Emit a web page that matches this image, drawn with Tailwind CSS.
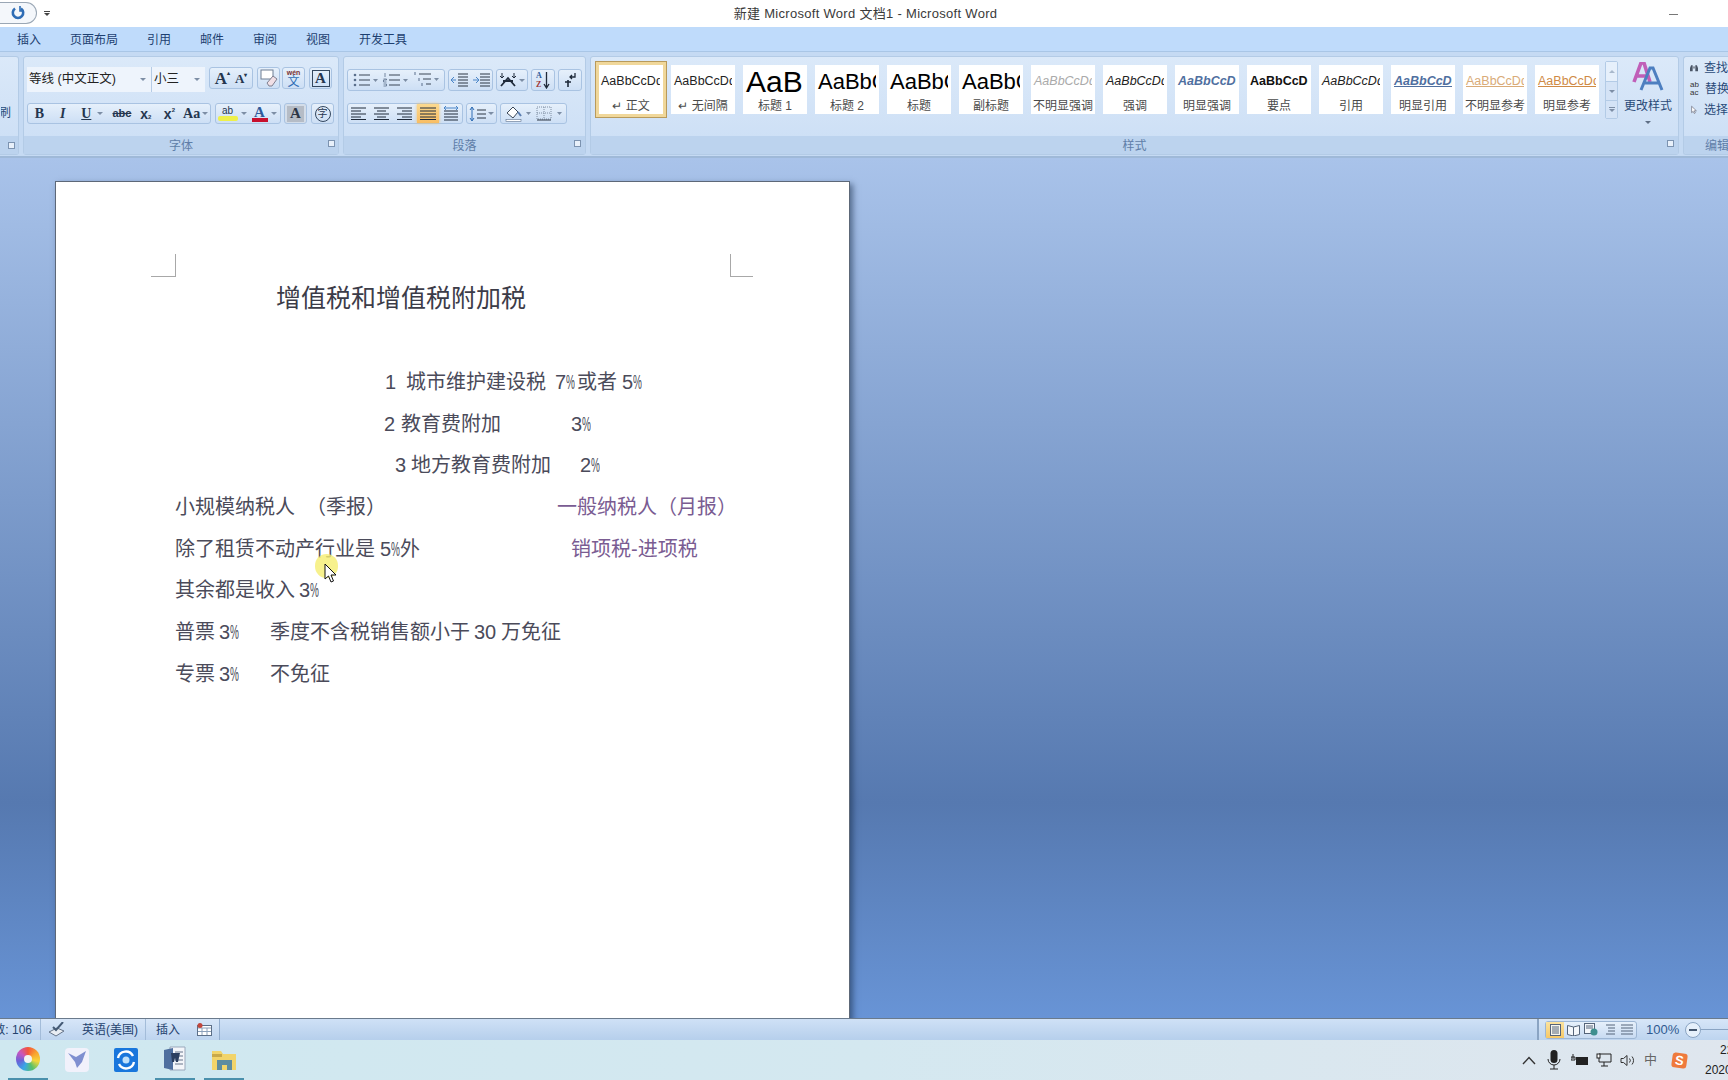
<!DOCTYPE html>
<html lang="zh-CN">
<head>
<meta charset="UTF-8">
<script src="https://cdn.jsdelivr.net/npm/@tailwindcss/browser@4"></script>
<title>新建 Microsoft Word 文档1 - Microsoft Word</title>
</head>
<body class="w-[1728px] h-[1080px] overflow-hidden flex flex-col bg-white font-['Liberation_Sans','Noto_Sans_CJK_SC',sans-serif] text-[#1f3f6e]">

<!-- title bar -->
<header class="h-[27px] shrink-0 bg-white relative flex items-center">
  <div class="w-[37px] h-[22px] -mt-[2px] rounded-r-full border border-[#9aa7b5] border-l-0 bg-[#f4f7fb] flex items-center justify-end pr-[10px]">
    <svg width="16" height="16" viewBox="0 0 16 16" fill="none"><path d="M5 3.500a5.200 5.200 0 1 0 6 0" stroke="#2f6db5" stroke-width="2.600"/><path d="M10 1v5h4" stroke="#2f6db5" stroke-width="1.600"/></svg>
  </div>
  <div class="ml-[7px] flex flex-col items-center gap-[1px]"><span class="w-[6px] h-[1px] bg-[#444]"></span><span class="w-0 h-0 border-x-[3px] border-x-transparent border-t-[3px] border-t-[#444]"></span></div>
  <div class="flex-1 text-center text-[13px] text-[#3a3a3a] ml-[12px] tracking-[0.3px]">新建 Microsoft Word 文档1 - Microsoft Word</div>
  <div class="w-[9px] h-[1px] bg-[#777] mr-[50px] mt-[1px]"></div>
</header>

<!-- tabs -->
<nav class="h-[25px] shrink-0 bg-[#bfdbfb] border-b border-[#a9c6e6] flex items-center pt-[2px] pl-[17px] gap-[29px] text-[12px] text-[#1d3f70]">
  <span>插入</span><span>页面布局</span><span>引用</span><span>邮件</span><span>审阅</span><span>视图</span><span>开发工具</span>
</nav>

<!-- ribbon -->
<section class="h-[106px] shrink-0 bg-[#c5daf3] pt-[4px] flex gap-[4px] border-b-2 border-[#9fb9d8]">

  <div class="w-[19px] h-[99px] shrink-0 rounded-r-[3px] border border-l-0 border-[#b3cbe6] flex flex-col bg-linear-to-b from-[#dbe9f9] to-[#cbdef5]">
    <div class="h-[80px] flex items-end justify-end pb-[14px] pr-[7px] text-[12px] text-[#2a4a78]"><span class="w-[10px] overflow-hidden whitespace-nowrap flex justify-end">刷</span></div>
    <div class="h-[18px] bg-[#bcd3ee] flex items-center justify-end pr-[3px]"><span class="w-[7px] h-[7px] border border-[#7c93b0] bg-[#e8f0fa]"></span></div>
  </div>

  <!-- font group -->
  <div class="w-[316px] h-[99px] shrink-0 rounded-[3px] border border-[#b3cbe6] flex flex-col bg-linear-to-b from-[#dbe9f9] to-[#cbdef5]">
    <div class="h-[80px] pl-[3px] pt-[10px] flex flex-col gap-[11px]">
      <div class="flex h-[25px] items-start">
        <div class="w-[125px] h-[25px] bg-[#eef4fc] border-r border-[#b5cbe5] flex items-center pl-[2px] text-[12.500px] text-[#222] justify-between pr-[5px]">等线 (中文正文)<span class="w-0 h-0 border-x-[3px] border-x-transparent border-t-[3px] border-t-[#7d8ea5]"></span></div>
        <div class="w-[53px] h-[25px] bg-[#eef4fc] flex items-center pl-[2px] text-[12.500px] text-[#222] justify-between pr-[5px]">小三<span class="w-0 h-0 border-x-[3px] border-x-transparent border-t-[3px] border-t-[#7d8ea5]"></span></div>
        <div class="ml-[4px] w-[44px] h-[22px] rounded-[3px] border border-[#a9c3e2] bg-linear-to-b from-[#e6f0fb] to-[#cddff5] flex items-center justify-center gap-[5px] font-['Liberation_Serif',serif] font-bold text-[#25364f]"><span class="text-[17px] leading-none">A<span class="text-[6px] align-top">▴</span></span><span class="text-[13px] leading-none">A<span class="text-[6px] align-top">▾</span></span></div>
        <div class="ml-[4px] w-[23px] h-[22px] rounded-[3px] border border-[#a9c3e2] bg-linear-to-b from-[#e6f0fb] to-[#cddff5] flex items-center justify-center">
          <svg width="18" height="18" viewBox="0 0 18 18"><rect x="1" y="1" width="12" height="9" fill="#fff" stroke="#6f7f94"/><path d="M7 14l6-7 4 3-5 7H9z" fill="#f0dfe6" stroke="#7f7f8f"/></svg>
        </div>
        <div class="ml-[2px] w-[23px] h-[22px] rounded-[3px] border border-[#a9c3e2] bg-linear-to-b from-[#e6f0fb] to-[#cddff5] flex flex-col items-center justify-center leading-none"><span class="text-[7px] font-bold text-[#7a3030]">wén</span><span class="text-[12px] text-[#2f6db5]">文</span></div>
        <div class="ml-[4px] w-[23px] h-[22px] rounded-[3px] border border-[#a9c3e2] bg-linear-to-b from-[#e6f0fb] to-[#cddff5] flex items-center justify-center"><span class="w-[18px] h-[17px] border border-[#33475f] flex items-center justify-center text-[15px] font-bold font-['Liberation_Serif',serif] text-[#25364f]">A</span></div>
      </div>
      <div class="flex h-[21px] items-start">
        <div class="w-[184px] h-[21px] rounded-[3px] border border-[#a9c3e2] bg-linear-to-b from-[#e6f0fb] to-[#cddff5] flex items-center text-[#25364f]">
          <span class="w-[23px] text-center text-[14px] font-bold font-['Liberation_Serif',serif]">B</span>
          <span class="w-[24px] text-center text-[14px] italic font-bold font-['Liberation_Serif',serif]">I</span>
          <span class="w-[36px] flex items-center justify-center gap-[6px] text-[14px] font-bold font-['Liberation_Serif',serif] underline">U<span class="w-0 h-0 border-x-[3px] border-x-transparent border-t-[3px] border-t-[#7d8ea5]"></span></span>
          <span class="w-[24px] text-center text-[11px] font-bold line-through">abc</span>
          <span class="w-[24px] text-center text-[14px] font-bold leading-none">x<span class="text-[6px]">2</span></span>
          <span class="w-[24px] text-center text-[14px] font-bold leading-none">x<span class="text-[6px] align-top">2</span></span>
          <span class="w-[29px] flex items-center justify-center gap-[2px] text-[14px] font-bold font-['Liberation_Serif',serif]">Aa<span class="w-0 h-0 border-x-[3px] border-x-transparent border-t-[3px] border-t-[#7d8ea5]"></span></span>
        </div>
        <div class="ml-[4px] w-[66px] h-[21px] rounded-[3px] border border-[#a9c3e2] bg-linear-to-b from-[#e6f0fb] to-[#cddff5] flex items-center">
          <span class="w-[33px] flex items-center justify-center gap-[3px]">
            <span class="flex flex-col items-center leading-none text-[10px] text-[#25364f]"><span class="w-[20px] text-center">ab</span><span class="w-[20px] h-[5px] bg-[#eef04a] rounded-[2px]"></span></span>
            <span class="w-0 h-0 border-x-[3px] border-x-transparent border-t-[3px] border-t-[#7d8ea5]"></span>
          </span>
          <span class="w-[33px] flex items-center justify-center gap-[3px]">
            <span class="flex flex-col items-center leading-none text-[15px] font-bold font-['Liberation_Serif',serif] text-[#2f5a9a]"><span class="h-[13px]">A</span><span class="w-[16px] h-[4px] bg-[#c8102e]"></span></span>
            <span class="w-0 h-0 border-x-[3px] border-x-transparent border-t-[3px] border-t-[#7d8ea5]"></span>
          </span>
        </div>
        <div class="ml-[3px] w-[23px] h-[21px] rounded-[3px] border border-[#a9c3e2] bg-[#d3dde9] flex items-center justify-center"><span class="w-[17px] h-[16px] bg-[#b5bcc6] flex items-center justify-center text-[15px] font-bold font-['Liberation_Serif',serif] text-[#2c3645]">A</span></div>
        <div class="ml-[4px] w-[23px] h-[21px] rounded-[3px] border border-[#a9c3e2] bg-linear-to-b from-[#e6f0fb] to-[#cddff5] flex items-center justify-center"><span class="w-[16px] h-[16px] rounded-full border border-[#33475f] flex items-center justify-center text-[10px] text-[#25364f]">字</span></div>
      </div>
    </div>
    <div class="h-[18px] bg-[#bcd3ee] flex items-center pt-[2px] relative"><span class="flex-1 text-center text-[12px] text-[#5f7ea8]">字体</span><span class="absolute right-[3px] top-[4px] w-[7px] h-[7px] border border-[#7c93b0] bg-[#e8f0fa]"></span></div>
  </div>

  <!-- paragraph group -->
  <div class="w-[243px] h-[99px] shrink-0 rounded-[3px] border border-[#b3cbe6] flex flex-col bg-linear-to-b from-[#dbe9f9] to-[#cbdef5]">
    <div class="h-[80px] pl-[3px] pt-[12px] flex flex-col gap-[12px]">
      <div class="flex h-[22px] gap-[3px]">
        <div class="w-[98px] rounded-[3px] border border-[#a9c3e2] bg-linear-to-b from-[#e6f0fb] to-[#cddff5] flex items-center justify-around px-[2px]">
          <svg width="26" height="14" viewBox="0 0 26 14"><path d="M7 2h11M7 7h11M7 12h11" stroke="#3a4656"/><circle cx="3" cy="2" r="1.300" fill="#5a6f8c"/><circle cx="3" cy="7" r="1.300" fill="#5a6f8c"/><circle cx="3" cy="12" r="1.300" fill="#5a6f8c"/><path d="M21 6h5l-2.500 3z" fill="#7d8ea5"/></svg>
          <svg width="26" height="14" viewBox="0 0 26 14"><path d="M7 2h11M7 7h11M7 12h11" stroke="#3a4656"/><path d="M3 0v4M1.500 6h3v1h-3v2h3M1.500 11h3v2h-3" stroke="#5a6f8c" fill="none" stroke-width=".8"/><path d="M21 6h5l-2.500 3z" fill="#7d8ea5"/></svg>
          <svg width="28" height="16" viewBox="0 0 28 16"><path d="M7 2h12M11 7h8M14 12h5" stroke="#3a4656"/><path d="M3 0v3M7 6v3M10 11v3" stroke="#5a6f8c"/><path d="M22 6h5l-2.500 3z" fill="#7d8ea5"/></svg>
        </div>
        <div class="w-[45px] rounded-[3px] border border-[#a9c3e2] bg-linear-to-b from-[#e6f0fb] to-[#cddff5] flex items-center justify-around">
          <svg width="17" height="14" viewBox="0 0 17 14"><path d="M7 1h10M7 4h10M7 7h10M7 10h10M7 13h10" stroke="#2c3645"/><path d="M5 7H0M3 4 0 7l3 3" stroke="#4a85c8" fill="none"/></svg>
          <svg width="17" height="14" viewBox="0 0 17 14"><path d="M7 1h10M7 4h10M7 7h10M7 10h10M7 13h10" stroke="#2c3645"/><path d="M0 7h5M3 4l3 3-3 3" stroke="#4a85c8" fill="none"/></svg>
        </div>
        <div class="w-[32px] rounded-[3px] border border-[#a9c3e2] bg-linear-to-b from-[#e6f0fb] to-[#cddff5] flex items-center justify-center gap-[2px]">
          <svg width="18" height="14" viewBox="0 0 18 14" fill="none"><path d="M2 13 9 5l7 8M4 8h10" stroke="#1f2a3a" stroke-width="1.800"/><path d="M3 0v5M1 3l2 2 2-2M15 0v5M13 3l2 2 2-2" stroke="#1f2a3a"/></svg>
          <span class="w-0 h-0 border-x-[3px] border-x-transparent border-t-[3px] border-t-[#7d8ea5]"></span>
        </div>
        <div class="w-[24px] rounded-[3px] border border-[#a9c3e2] bg-linear-to-b from-[#e6f0fb] to-[#cddff5] flex items-center justify-center gap-[1px]">
          <span class="flex flex-col text-[8px] leading-[9px] font-bold font-['Liberation_Serif',serif]"><span class="text-[#2f5a9a]">A</span><span class="text-[#a03838]">Z</span></span>
          <svg width="7" height="17" viewBox="0 0 7 17" fill="none"><path d="M3.500 0v15M1 12l2.500 4L6 12" stroke="#1f2a3a" stroke-width="1.300"/></svg>
        </div>
        <div class="w-[24px] rounded-[3px] border border-[#a9c3e2] bg-linear-to-b from-[#e6f0fb] to-[#cddff5] flex items-center justify-center">
          <svg width="14" height="16" viewBox="0 0 14 16" fill="none"><path d="M12 1v4H7M9 3 7 5l2 2" stroke="#1f2a3a" stroke-width="1.300"/><path d="M5 8v7M2 10h6" stroke="#1f2a3a" stroke-width="1.600"/></svg>
        </div>
      </div>
      <div class="flex h-[21px] gap-[3px]">
        <div class="w-[116px] rounded-[3px] border border-[#a9c3e2] bg-linear-to-b from-[#e6f0fb] to-[#cddff5] flex items-stretch">
          <span class="w-[23px] flex items-center justify-center"><svg width="16" height="13" viewBox="0 0 16 13"><path d="M0 1h15M0 4h10M0 7h15M0 10h10M0 12.500h15" stroke="#1f2a3a"/></svg></span>
          <span class="w-[23px] flex items-center justify-center"><svg width="16" height="13" viewBox="0 0 16 13"><path d="M0 1h15M3 4h9M0 7h15M3 10h9M0 12.500h15" stroke="#1f2a3a"/></svg></span>
          <span class="w-[24px] flex items-center justify-center"><svg width="16" height="13" viewBox="0 0 16 13"><path d="M0 1h15M5 4h10M0 7h15M5 10h10M0 12.500h15" stroke="#1f2a3a"/></svg></span>
          <span class="w-[23px] flex items-center justify-center bg-linear-to-b from-[#fbd98f] to-[#f8bd62] shadow-[0_0_3px_#f4c46e]"><svg width="16" height="13" viewBox="0 0 16 13"><path d="M0 1h16M0 4h16M0 7h16M0 10h16M0 12.500h16" stroke="#1f2a3a"/></svg></span>
          <span class="w-[23px] flex items-center justify-center"><svg width="16" height="15" viewBox="0 0 16 15" fill="none"><path d="M1 5h14M1 8h14M1 11h14M1 14h14" stroke="#1f2a3a"/><path d="M1 2h14M3 0 1 2l2 2M13 0l2 2-2 2" stroke="#4a85c8"/></svg></span>
        </div>
        <div class="w-[31px] rounded-[3px] border border-[#a9c3e2] bg-linear-to-b from-[#e6f0fb] to-[#cddff5] flex items-center justify-center gap-[2px]">
          <svg width="17" height="16" viewBox="0 0 17 16" fill="none"><path d="M8 4h9M8 8h9M8 12h9" stroke="#2c3645"/><path d="M3 1v14M1 4l2-3 2 3M1 12l2 3 2-3" stroke="#2f6db5"/></svg>
          <span class="w-0 h-0 border-x-[3px] border-x-transparent border-t-[3px] border-t-[#7d8ea5]"></span>
        </div>
        <div class="w-[67px] rounded-[3px] border border-[#a9c3e2] bg-linear-to-b from-[#e6f0fb] to-[#cddff5] flex items-center justify-around px-[2px]">
          <svg width="26" height="17" viewBox="0 0 26 17"><path d="M2 8 8 2l5 5-5 6z" fill="#fff" stroke="#3a4656"/><path d="M13 7l3 4" stroke="#5a7db0" stroke-width="2"/><rect x="1" y="14.500" width="15" height="2" fill="#fff" stroke="#5a6f8c" stroke-width=".6"/><path d="M21 7h5l-2.500 3z" fill="#7d8ea5"/></svg>
          <svg width="26" height="15" viewBox="0 0 26 15"><rect x="1" y="1" width="14" height="12" fill="none" stroke="#7f8ea2" stroke-dasharray="1 1"/><path d="M8 1v12M1 7h14" stroke="#7f8ea2" stroke-dasharray="1 1"/><path d="M1 14h14" stroke="#2c3645"/><path d="M21 6h5l-2.500 3z" fill="#7d8ea5"/></svg>
        </div>
      </div>
    </div>
    <div class="h-[18px] bg-[#bcd3ee] flex items-center pt-[2px] relative"><span class="flex-1 text-center text-[12px] text-[#5f7ea8]">段落</span><span class="absolute right-[4px] top-[4px] w-[7px] h-[7px] border border-[#7c93b0] bg-[#e8f0fa]"></span></div>
  </div>

  <!-- styles group -->
  <div class="w-[1089px] h-[99px] shrink-0 rounded-[3px] border border-[#b3cbe6] flex flex-col bg-linear-to-b from-[#dbe9f9] to-[#cbdef5]">
    <div class="h-[80px] flex pt-[8px]">
      <div class="flex gap-[8px] pl-[8px] h-[49px] text-[#4a4a4a]">
        <div class="w-[64px] h-[49px] shrink-0 bg-white flex flex-col items-start shadow-[0_0_0_3px_#f0d79a,0_0_0_4px_#b89a5c]"><div class="h-[32px] w-[61px] overflow-hidden whitespace-nowrap flex items-center pl-[2px] text-[12.500px] text-[#222]">AaBbCcDd</div><div class="h-[17px] w-full text-center text-[12px] leading-[19px]">↵ 正文</div></div>
        <div class="w-[64px] h-[49px] shrink-0 bg-white flex flex-col items-start"><div class="h-[32px] w-[61px] overflow-hidden whitespace-nowrap flex items-center pl-[3px] text-[12.500px] text-[#222]">AaBbCcDd</div><div class="h-[17px] w-full text-center text-[12px] leading-[19px]">↵ 无间隔</div></div>
        <div class="w-[64px] h-[49px] shrink-0 bg-white flex flex-col items-start"><div class="h-[32px] w-[61px] overflow-hidden whitespace-nowrap flex items-center pl-[3px] text-[30px] text-black">AaBbC</div><div class="h-[17px] w-full text-center text-[12px] leading-[19px]">标题 1</div></div>
        <div class="w-[64px] h-[49px] shrink-0 bg-white flex flex-col items-start"><div class="h-[32px] w-[61px] overflow-hidden whitespace-nowrap flex items-center pl-[3px] text-[22px] text-black">AaBbCc</div><div class="h-[17px] w-full text-center text-[12px] leading-[19px]">标题 2</div></div>
        <div class="w-[64px] h-[49px] shrink-0 bg-white flex flex-col items-start"><div class="h-[32px] w-[61px] overflow-hidden whitespace-nowrap flex items-center pl-[3px] text-[22px] text-black">AaBbCc</div><div class="h-[17px] w-full text-center text-[12px] leading-[19px]">标题</div></div>
        <div class="w-[64px] h-[49px] shrink-0 bg-white flex flex-col items-start"><div class="h-[32px] w-[61px] overflow-hidden whitespace-nowrap flex items-center pl-[3px] text-[22px] text-black">AaBbCc</div><div class="h-[17px] w-full text-center text-[12px] leading-[19px]">副标题</div></div>
        <div class="w-[64px] h-[49px] shrink-0 bg-white flex flex-col items-start"><div class="h-[32px] w-[61px] overflow-hidden whitespace-nowrap flex items-center pl-[3px] text-[12.500px] italic text-[#aaa]">AaBbCcDd</div><div class="h-[17px] w-full text-center text-[12px] leading-[19px] whitespace-nowrap">不明显强调</div></div>
        <div class="w-[64px] h-[49px] shrink-0 bg-white flex flex-col items-start"><div class="h-[32px] w-[61px] overflow-hidden whitespace-nowrap flex items-center pl-[3px] text-[12.500px] italic text-[#222]">AaBbCcDd</div><div class="h-[17px] w-full text-center text-[12px] leading-[19px]">强调</div></div>
        <div class="w-[64px] h-[49px] shrink-0 bg-white flex flex-col items-start"><div class="h-[32px] w-[61px] overflow-hidden whitespace-nowrap flex items-center pl-[3px] text-[12.500px] italic font-bold text-[#4f6f9f]">AaBbCcDd</div><div class="h-[17px] w-full text-center text-[12px] leading-[19px]">明显强调</div></div>
        <div class="w-[64px] h-[49px] shrink-0 bg-white flex flex-col items-start"><div class="h-[32px] w-[61px] overflow-hidden whitespace-nowrap flex items-center pl-[3px] text-[12.500px] font-bold text-[#111]">AaBbCcDd</div><div class="h-[17px] w-full text-center text-[12px] leading-[19px]">要点</div></div>
        <div class="w-[64px] h-[49px] shrink-0 bg-white flex flex-col items-start"><div class="h-[32px] w-[61px] overflow-hidden whitespace-nowrap flex items-center pl-[3px] text-[12.500px] italic text-[#222]">AaBbCcDd</div><div class="h-[17px] w-full text-center text-[12px] leading-[19px]">引用</div></div>
        <div class="w-[64px] h-[49px] shrink-0 bg-white flex flex-col items-start"><div class="h-[32px] w-[61px] overflow-hidden whitespace-nowrap flex items-center pl-[3px] text-[12.500px] italic font-bold underline text-[#4f6f9f]">AaBbCcDd</div><div class="h-[17px] w-full text-center text-[12px] leading-[19px]">明显引用</div></div>
        <div class="w-[64px] h-[49px] shrink-0 bg-white flex flex-col items-start"><div class="h-[32px] w-[61px] overflow-hidden whitespace-nowrap flex items-center pl-[3px] text-[12.500px] underline text-[#d9ab78]">AaBbCcDd</div><div class="h-[17px] w-full text-center text-[12px] leading-[19px] whitespace-nowrap">不明显参考</div></div>
        <div class="w-[64px] h-[49px] shrink-0 bg-white flex flex-col items-start"><div class="h-[32px] w-[61px] overflow-hidden whitespace-nowrap flex items-center pl-[3px] text-[12.500px] underline text-[#cf8a45]">AaBbCcDd</div><div class="h-[17px] w-full text-center text-[12px] leading-[19px]">明显参考</div></div>
      </div>
      <div class="ml-[6px] -mt-[4px] w-[13px] h-[58px] rounded-[2px] border border-[#b3cbe6] flex flex-col">
        <span class="h-[20px] bg-[#e6f0fb] border-b border-[#b3cbe6] flex items-center justify-center"><span class="w-0 h-0 border-x-[3px] border-x-transparent border-b-[3px] border-b-[#a9b9cc]"></span></span>
        <span class="h-[19px] bg-[#d4e3f6] border-b border-[#b3cbe6] flex items-center justify-center"><span class="w-0 h-0 border-x-[3px] border-x-transparent border-t-[3px] border-t-[#7d8ea5]"></span></span>
        <span class="h-[17px] bg-[#d4e3f6] flex flex-col items-center justify-center gap-[1px]"><span class="w-[6px] h-[1px] bg-[#7d8ea5]"></span><span class="w-0 h-0 border-x-[3px] border-x-transparent border-t-[3px] border-t-[#7d8ea5]"></span></span>
      </div>
      <div class="ml-[5px] -mt-[3px] w-[50px] flex flex-col items-center">
        <svg width="32" height="29" viewBox="0 0 32 29" fill="none"><path d="M2 20 9 1h3l6 19M5 14h11" stroke="#c05fb8" stroke-width="3.600"/><path d="M9 28 18 6h3l9 22M13 21h14" stroke="#4d7fc0" stroke-width="3"/></svg>
        <span class="mt-[7px] text-[12px] leading-[16px] whitespace-nowrap text-[#2a4a78]">更改样式</span>
        <span class="mt-[7px] w-0 h-0 border-x-[3px] border-x-transparent border-t-[3px] border-t-[#5f6f85]"></span>
      </div>
    </div>
    <div class="h-[18px] bg-[#bcd3ee] flex items-center pt-[2px] relative"><span class="flex-1 text-center text-[12px] text-[#5f7ea8]">样式</span><span class="absolute right-[4px] top-[4px] w-[7px] h-[7px] border border-[#7c93b0] bg-[#e8f0fa]"></span></div>
  </div>

  <!-- editing group, cut by the window edge -->
  <div class="flex-1 h-[99px] rounded-l-[3px] border border-r-0 border-[#b3cbe6] flex flex-col bg-linear-to-b from-[#dbe9f9] to-[#cbdef5] overflow-hidden">
    <div class="h-[80px] pl-[6px] pt-[2px] flex flex-col gap-[4px] text-[12px] text-[#2a4a78]">
      <div class="flex items-center gap-[6px] h-[17px] whitespace-nowrap"><svg width="15" height="14" viewBox="0 0 15 14"><path d="M2 2h3v11H0V7zM13 2h-3v11h5V7z" fill="#4a5566"/><rect x="5" y="4" width="5" height="4" fill="#88929f"/></svg><span>查找</span></div>
      <div class="flex items-center gap-[6px] h-[17px] whitespace-nowrap"><span class="w-[15px] text-[8px] leading-[8px] text-[#333]">ab<br>ac</span><span>替换</span></div>
      <div class="flex items-center gap-[6px] h-[17px] whitespace-nowrap"><svg width="15" height="16" viewBox="0 0 15 16"><path d="M3 1v12l3-2.500 2 4 2-1-2-4h4z" fill="#fff" stroke="#445"/></svg><span>选择</span></div>
    </div>
    <div class="h-[18px] bg-[#bcd3ee] flex items-center pt-[2px] pl-[21px] text-[12px] text-[#5f7ea8] whitespace-nowrap">编辑</div>
  </div>
</section>

<!-- document area -->
<main class="flex-1 min-h-0 bg-linear-to-b from-[#a9c3ea] via-[#5679b0] via-[75%] to-[#6894d6] pt-[23px] pl-[55px] overflow-hidden">
  <article class="w-[795px] h-[900px] bg-white border border-[#5d6878] shadow-[3px_3px_6px_rgba(20,40,70,0.55)] relative pt-[96px] text-[20px] text-[#4b4b5a] whitespace-nowrap">
    <span class="absolute left-[95px] top-[72px] w-[25px] h-[23px] border-r border-b border-[#a8a8a8]"></span>
    <span class="absolute left-[674px] top-[72px] w-[23px] h-[23px] border-l border-b border-[#a8a8a8]"></span>

    <h1 class="h-[42px] pl-[220px] flex items-center text-[25px] font-normal text-[#3c3c48]">增值税和增值税附加税</h1>

    <div class="mt-[41px] h-[41.700px] pl-[329px] flex items-center"><span class="w-[21px]">1</span><span class="w-[149px]">城市维护建设税</span><span class="w-[22px]">7<span class="inline-block w-[9px] origin-left scale-x-50">%</span></span><span class="w-[45px]">或者</span><span>5<span class="inline-block w-[9px] origin-left scale-x-50">%</span></span></div>
    <div class="h-[41.700px] pl-[328px] flex items-center"><span class="w-[17px]">2</span><span class="w-[170px]">教育费附加</span><span>3<span class="inline-block w-[9px] origin-left scale-x-50">%</span></span></div>
    <div class="h-[41.700px] pl-[339px] flex items-center"><span class="w-[16px]">3</span><span class="w-[169px]">地方教育费附加</span><span>2<span class="inline-block w-[9px] origin-left scale-x-50">%</span></span></div>
    <div class="h-[41.700px] pl-[119px] flex items-center"><span class="w-[131px]">小规模纳税人</span><span class="w-[251px]">（季报）</span><span class="text-[#7a5c92]">一般纳税人（月报）</span></div>
    <div class="h-[41.700px] pl-[119px] flex items-center"><span class="w-[205px]">除了租赁不动产行业是</span><span class="w-[20px]">5<span class="inline-block w-[9px] origin-left scale-x-50">%</span></span><span class="w-[171px]">外</span><span class="text-[#7a5c92]">销项税-进项税</span></div>
    <div class="h-[41.700px] pl-[119px] flex items-center"><span class="w-[124px]">其余都是收入</span><span>3<span class="inline-block w-[9px] origin-left scale-x-50">%</span></span></div>
    <div class="h-[41.700px] pl-[119px] flex items-center"><span class="w-[44px]">普票</span><span class="w-[51px]">3<span class="inline-block w-[9px] origin-left scale-x-50">%</span></span><span class="w-[204px]">季度不含税销售额小于</span><span class="w-[27px]">30</span><span>万免征</span></div>
    <div class="h-[41.700px] pl-[119px] flex items-center"><span class="w-[44px]">专票</span><span class="w-[51px]">3<span class="inline-block w-[9px] origin-left scale-x-50">%</span></span><span>不免征</span></div>

    <!-- mouse pointer with its highlight -->
    <span class="absolute left-[259px] top-[372px] w-[23px] h-[24px] rounded-full bg-[#f5ee70]/80"></span>
    <svg class="absolute left-[268px] top-[381px]" width="14" height="21" viewBox="0 0 14 21"><path d="M1 1v15l3.500-3 2.500 6 2.500-1-2.500-6H12z" fill="#fff" stroke="#111"/></svg>
  </article>
</main>

<!-- status bar -->
<div class="h-[22px] shrink-0 border-t border-[#6a7a8c] bg-linear-to-b from-[#d7e6f8] to-[#bdd4ef] flex items-center text-[12px] text-[#24426e]">
  <span class="w-[41px] h-full flex items-center justify-end pr-[8px] border-r border-[#a3bcd9] overflow-hidden whitespace-nowrap">字数: 106</span>
  <span class="w-[30px] flex justify-center"><svg width="17" height="15" viewBox="0 0 17 15" fill="none"><path d="M1 10l7 4 8-5-7-3z" fill="#e8edf3" stroke="#66758a"/><path d="M5 5l3 3 7-8" stroke="#445a75" stroke-width="2"/></svg></span>
  <span class="w-[75px] h-full flex items-center pl-[11px] border-r border-[#a3bcd9] whitespace-nowrap">英语(美国)</span>
  <span class="w-[44px] pl-[10px]">插入</span>
  <span class="w-[30px] h-full flex items-center pl-[7px] border-r border-[#93aecf]"><svg width="15" height="13" viewBox="0 0 15 13"><rect x=".5" y="2.500" width="14" height="10" fill="#fff" stroke="#5c6f88"/><path d="M1 5h13M5 5v7M10 5v7M1 8.500h13" stroke="#8ba0ba"/><circle cx="3" cy="2.500" r="2.500" fill="#c2463c"/></svg></span>
  <span class="w-[1319px] h-[21px] bg-linear-to-b from-[#cfe1f6] to-[#b6cfec] border-r-2 border-[#8aa4c3]"></span>
  <div class="ml-[6px] w-[92px] h-[18px] rounded-[3px] border border-[#9db6d4] bg-linear-to-b from-[#e6f0fb] to-[#c8dbf2] flex items-stretch">
    <span class="w-[18px] bg-linear-to-b from-[#fbe39f] to-[#f6c866] flex items-center justify-center"><svg width="11" height="12" viewBox="0 0 11 12"><rect x=".5" y=".5" width="10" height="11" fill="#f5f5ee" stroke="#55647a"/><path d="M2 3h7M2 5h7M2 7h7M2 9h7" stroke="#55647a"/></svg></span>
    <span class="w-[18px] flex items-center justify-center"><svg width="13" height="12" viewBox="0 0 13 12"><path d="M.5 1.500 6.500 3l6-1.500v9l-6 1.500-6-1.500zM6.500 3v9" fill="#f4f7fb" stroke="#55647a"/></svg></span>
    <span class="w-[18px] flex items-center justify-center"><svg width="14" height="13" viewBox="0 0 14 13"><rect x=".5" y=".5" width="10" height="10" fill="#f4f7fb" stroke="#55647a"/><path d="M2 3h7M2 5h7" stroke="#55647a"/><circle cx="10" cy="9" r="3.500" fill="#3f8f8f"/></svg></span>
    <span class="w-[18px] flex items-center justify-center"><svg width="12" height="11" viewBox="0 0 12 11"><path d="M3 1h9M5 4h7M5 7h7M3 10h9" stroke="#55647a"/></svg></span>
    <span class="w-[18px] flex items-center justify-center"><svg width="12" height="11" viewBox="0 0 12 11"><path d="M0 1h12M0 4h12M0 7h12M0 10h12" stroke="#55647a"/></svg></span>
  </div>
  <span class="ml-[9px] w-[34px] text-[#2f5a90] text-[13px]">100%</span>
  <span class="ml-[5px] w-[16px] h-[16px] rounded-full border border-[#8aa4c3] bg-[#e6f0fb] flex items-center justify-center"><span class="w-[8px] h-[2px] bg-[#44566e]"></span></span>
  <span class="flex-1 h-[1px] bg-[#8aa4c3]"></span>
</div>

<!-- taskbar -->
<footer class="h-[40px] shrink-0 bg-linear-to-r from-[#cfe8f0] via-[#d4e8f0] to-[#dfe6ee] flex items-center pl-[8px] gap-[9px]">
  <div class="w-[40px] h-full flex items-center justify-center border-b-2 border-[#4a90ac]">
    <span class="w-[24px] h-[24px] rounded-full bg-[conic-gradient(#f4553a,#f9a12e,#f5d63a,#58c06a,#38a7e8,#6a62d8,#c855c0,#f4553a)] flex items-center justify-center"><span class="w-[8px] h-[8px] rounded-full bg-[#f3f3f3]"></span></span>
  </div>
  <div class="w-[40px] h-full flex items-center justify-center">
    <span class="w-[24px] h-[24px] rounded-[4px] bg-[#f1f1fb] flex items-center justify-center"><svg width="20" height="18" viewBox="0 0 20 18"><path d="M1 2l8 4 10-6-4 11-5 6-2-6z" fill="#7f8fd0"/></svg></span>
  </div>
  <div class="w-[40px] h-full flex items-center justify-center">
    <span class="w-[24px] h-[24px] rounded-[2px] bg-[#1976dc] flex items-center justify-center"><svg width="20" height="20" viewBox="0 0 20 20" fill="none"><path d="M2 8a8 8 0 0 1 15-2M18 12a8 8 0 0 1-15 2" stroke="#fff" stroke-width="2.400"/><circle cx="10" cy="10" r="3.500" fill="#bfe0fa"/></svg></span>
  </div>
  <div class="w-[40px] h-full flex items-center justify-center border-b-2 border-[#4a90ac]">
    <svg width="24" height="26" viewBox="0 0 24 26"><path d="M7 1h15v23H7z" fill="#f4f6fa" stroke="#9aa8bb"/><path d="M1 4l9-2v22l-9-2z" fill="#4f6f9f"/><path d="M12 6h8M12 10h8M12 14h8M12 18h8" stroke="#66758a"/><path d="M8 7h9l-2 9h-2l-1-4-1 4H9z" fill="#2c3f60"/></svg>
  </div>
  <div class="w-[40px] h-full flex items-center justify-center border-b-2 border-[#4a90ac]">
    <svg width="24" height="21" viewBox="0 0 24 21"><path d="M0 2h9l2 3h13v16H0z" fill="#f2d46a"/><path d="M0 5h10v3H0z" fill="#c9a94a"/><path d="M5 11h15v10h-5v-5h-5v5H5z" fill="#5e8ca0"/></svg>
  </div>

  <div class="ml-auto flex items-center gap-[8px]">
    <svg width="14" height="9" viewBox="0 0 14 9" fill="none"><path d="M1 8l6-6.500L13 8" stroke="#333" stroke-width="1.400"/></svg>
    <svg class="ml-[3px]" width="14" height="20" viewBox="0 0 14 20" fill="none"><rect x="3.500" y="0" width="7" height="13" rx="3.500" fill="#222"/><path d="M1 9a6 6 0 0 0 12 0M7 15v4M3 19h8" stroke="#222"/></svg>
    <svg class="ml-[2px]" width="17" height="13" viewBox="0 0 17 13"><rect x="5" y="3" width="12" height="8" fill="#222"/><path d="M2 0v5M0 3v3h4V3z" stroke="#222" fill="none"/></svg>
    <svg width="16" height="14" viewBox="0 0 16 14" fill="none"><path d="M3 1h12v8H3zM8 9v4M5 13h7" stroke="#222"/><rect x="1" y="1" width="3" height="4" fill="#fff" stroke="#222"/></svg>
    <svg width="16" height="13" viewBox="0 0 16 13" fill="none"><path d="M1 4.500h2.500L7 1.500v10l-3.500-3H1z" stroke="#333"/><path d="M9.500 4.500a3 3 0 0 1 0 4M12 2.500a6 6 0 0 1 0 8" stroke="#333"/></svg>
    <span class="w-[14px] text-[13px] text-[#666]">中</span>
    <span class="ml-[6px] w-[15px] h-[15px] rotate-[8deg] rounded-[3px] bg-[#ef7a3c] flex items-center justify-center text-[13px] leading-none font-bold text-white">S</span>
    <div class="ml-[10px] w-[23px] h-[40px] overflow-hidden flex flex-col text-[12px] leading-[20px] text-[#222]">
      <span class="pl-[15px] whitespace-nowrap">22:30</span>
      <span class="whitespace-nowrap">2020/1/1</span>
    </div>
  </div>
</footer>
</body>
</html>
